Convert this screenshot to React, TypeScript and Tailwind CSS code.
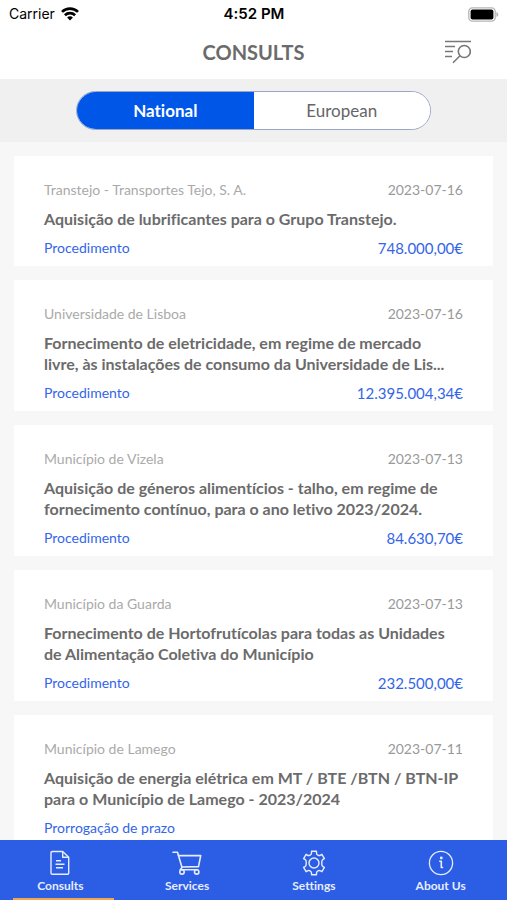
import { useState } from "react";
import type { ReactNode } from "react";

type Consult = {
  entity: string;
  date: string;
  title: string;
  status: string;
  value?: string;
};

const consults: Consult[] = [
  {
    entity: "Transtejo - Transportes Tejo, S. A.",
    date: "2023-07-16",
    title: "Aquisição de lubrificantes para o Grupo Transtejo.",
    status: "Procedimento",
    value: "748.000,00€",
  },
  {
    entity: "Universidade de Lisboa",
    date: "2023-07-16",
    title:
      "Fornecimento de eletricidade, em regime de mercado\nlivre, às instalações de consumo da Universidade de Lis...",
    status: "Procedimento",
    value: "12.395.004,34€",
  },
  {
    entity: "Município de Vizela",
    date: "2023-07-13",
    title:
      "Aquisição de géneros alimentícios - talho, em regime de\nfornecimento contínuo, para o ano letivo 2023/2024.",
    status: "Procedimento",
    value: "84.630,70€",
  },
  {
    entity: "Município da Guarda",
    date: "2023-07-13",
    title:
      "Fornecimento de Hortofrutícolas para todas as Unidades\nde Alimentação Coletiva do Município",
    status: "Procedimento",
    value: "232.500,00€",
  },
  {
    entity: "Município de Lamego",
    date: "2023-07-11",
    title:
      "Aquisição de energia elétrica em MT / BTE /BTN / BTN-IP\npara o Município de Lamego - 2023/2024",
    status: "Prorrogação de prazo",
  },
];

function WifiIcon() {
  return (
    <svg width="18" height="14" viewBox="0 0 18 14" fill="none" stroke="#000" strokeWidth="2.6" aria-hidden="true">
      <path d="M1 4.9a11.4 11.4 0 0 1 16 0" />
      <path d="M3.9 8.2a7.3 7.3 0 0 1 10.2 0" />
      <path d="M9 13.6 6.100 10.600a4 4 0 0 1 5.800 0z" fill="#000" stroke="none" />
    </svg>
  );
}

function BatteryIcon() {
  return (
    <svg width="31" height="15" viewBox="0 0 31 15" aria-hidden="true">
      <rect x="0.8" y="0.8" width="26.4" height="13.4" rx="3.6" fill="#fff" stroke="#b5b5b5" strokeWidth="1.3" />
      <rect x="2.6" y="2.6" width="22.8" height="9.8" rx="2" fill="#000" />
      <path d="M28.4 5v5c1.2-.4 1.9-1.3 1.9-2.5S29.6 5.4 28.4 5z" fill="#b5b5b5" />
    </svg>
  );
}

function FilterSearchIcon() {
  return (
    <svg width="26" height="24" viewBox="0 0 26 24" fill="none" stroke="#777" strokeWidth="1.6" aria-hidden="true">
      <path d="M0 1.5h26M0 6.5h10M0 11.5h8M0 16.5h7" />
      <circle cx="19.3" cy="11.5" r="6" />
      <path d="m15 15.8-7 7" />
    </svg>
  );
}

function DocumentIcon() {
  return (
    <svg width="20" height="26" viewBox="0 0 20 26" fill="none" stroke="currentColor" strokeWidth="1.4" strokeLinejoin="round" aria-hidden="true">
      <path d="M2.200 1.500h10.500l6 5.800v15.800a1.200 1.200 0 0 1-1.200 1.200H2.200A1.200 1.200 0 0 1 1 23.100V2.700a1.200 1.200 0 0 1 1.200-1.200z" />
      <path d="M12.700 1.500v5.800h6" />
      <path d="M6 10.800h5M5.500 14.300h9M6 17.800h7" />
    </svg>
  );
}

function CartIcon() {
  return (
    <svg width="30" height="26" viewBox="0 0 30 26" fill="none" stroke="currentColor" strokeWidth="1.6" strokeLinecap="round" strokeLinejoin="round" aria-hidden="true">
      <path d="M1 2.3h4.500l4.500 15.200-1.700 2.200h17" />
      <path d="M6.500 5.600h22.200l-2.200 11-16.700.4" />
      <circle cx="10" cy="21.900" r="2.200" />
      <circle cx="24.700" cy="21.900" r="2.200" />
    </svg>
  );
}

function GearIcon() {
  return (
    <svg width="26" height="26" viewBox="0 0 26 26" fill="none" stroke="currentColor" strokeWidth="1.4" strokeLinejoin="round" aria-hidden="true">
      <path d="M10.500 1.300h5v1.600q0 1.500 1.400 2.200 1.400.8 2.600 0l1.400-.8 2.500 4.300-1.400.8q-1.200.8-1.200 2.300v2.600q0 1.500 1.200 2.300l1.400.8-2.500 4.300-1.400-.8q-1.200-.8-2.600 0-1.400.7-1.400 2.200v1.600h-5v-1.600q0-1.500-1.400-2.200-1.400-.8-2.600 0l-1.400.8-2.500-4.300 1.400-.8q1.200-.8 1.200-2.300v-2.600q0-1.500-1.200-2.300l-1.400-.8 2.500-4.300 1.400.8q1.200.8 2.600 0 1.400-.7 1.400-2.200z" />
      <circle cx="13" cy="13" r="5" />
    </svg>
  );
}

function InfoIcon() {
  return (
    <svg width="26" height="26" viewBox="0 0 26 26" fill="none" stroke="currentColor" strokeWidth="1.3" strokeLinecap="round" strokeLinejoin="round" aria-hidden="true">
      <circle cx="13" cy="13" r="11.6" />
      <path d="M11.800 11.300h1.500v6.200h1.200" strokeWidth="1.6" />
      <circle cx="13.300" cy="8" r="0.800" fill="currentColor" />
    </svg>
  );
}

const sections: { label: string; icon: ReactNode }[] = [
  { label: "Consults", icon: <DocumentIcon /> },
  { label: "Services", icon: <CartIcon /> },
  { label: "Settings", icon: <GearIcon /> },
  { label: "About Us", icon: <InfoIcon /> },
];

function StatusBar() {
  return (
    <div className="grid h-7 grid-cols-3 items-center pr-2 pl-[9px] font-['Inter',sans-serif] text-sm text-black">
      <div className="flex items-center gap-1.5">
        <span>Carrier</span>
        <WifiIcon />
      </div>
      <span className="text-center text-[15px] font-semibold">4:52 PM</span>
      <div className="flex justify-end">
        <BatteryIcon />
      </div>
    </div>
  );
}

function ConsultCard({ consult }: { consult: Consult }) {
  return (
    <article className="bg-white px-[30px] pt-6 pb-2">
      <div className="flex justify-between text-sm leading-5">
        <span className="text-[#aaa]">{consult.entity}</span>
        <time className="text-[#999]">{consult.date}</time>
      </div>
      <h2 className="mt-2 whitespace-pre-line text-base leading-[21px] font-bold text-[#6b6b6b]">
        {consult.title}
      </h2>
      <div className="mt-[9px] flex justify-between text-sm leading-5 text-[#3465e8]">
        <span>{consult.status}</span>
        <span className="text-[15px]">{consult.value}</span>
      </div>
    </article>
  );
}

export default function App() {
  const [scope, setScope] = useState("National");
  const [section, setSection] = useState("Consults");

  return (
    <div className="flex h-screen flex-col overflow-hidden bg-[#f7f7f7] font-['Lato',sans-serif] [font-variant-ligatures:none]">
      <header className="shrink-0 bg-white">
        <StatusBar />
        <div className="grid h-[51px] grid-cols-[1fr_auto_1fr] items-center px-9 pb-1">
          <h1 className="col-start-2 text-xl font-bold text-[#6b6b6b]">CONSULTS</h1>
          <button type="button" aria-label="Filter consults" className="justify-self-end">
            <FilterSearchIcon />
          </button>
        </div>
      </header>

      <div className="flex shrink-0 justify-center bg-[#f0f0f0] py-3">
        <div className="flex h-[39px] w-[70%] overflow-hidden rounded-full border border-[#9aa6c8] bg-white">
          {["National", "European"].map((name) => (
            <button
              key={name}
              type="button"
              aria-pressed={scope === name}
              onClick={() => setScope(name)}
              className={
                scope === name
                  ? "flex-1 bg-[#0057e7] text-[17px] font-bold text-white"
                  : "flex-1 bg-white text-[17px] text-[#666]"
              }
            >
              {name}
            </button>
          ))}
        </div>
      </div>

      <main className="flex min-h-0 flex-1 flex-col gap-3.5 overflow-hidden px-3.5 pt-3.5">
        {consults.map((consult) => (
          <ConsultCard key={consult.title} consult={consult} />
        ))}
      </main>

      <nav className="grid h-[60px] shrink-0 grid-cols-4 bg-[#2c5de5] text-[#e6edff]">
        {sections.map(({ label, icon }) => (
          <button
            key={label}
            type="button"
            onClick={() => setSection(label)}
            className="flex flex-col items-stretch pt-2.5"
          >
            <span className="flex flex-col items-center gap-0.5 pr-1.5">
              {icon}
              <span className="text-xs leading-4 font-bold">{label}</span>
            </span>
            {section === label && <span className="mx-[13px] mt-auto h-0.5 bg-[#f0a850]" />}
          </button>
        ))}
      </nav>
    </div>
  );
}
